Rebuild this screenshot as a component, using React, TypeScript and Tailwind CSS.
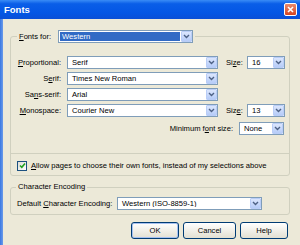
import React from "react";

function Arrow() {
  return (
    <div className="flex items-center justify-center w-[11px] h-[11px] rounded-[1px] border border-[#b9cdf7] bg-gradient-to-b from-[#dbe6fd] to-[#b6ccf8]">
      <svg width="7" height="5" viewBox="0 0 7 5">
        <path d="M1 1 L3.5 3.5 L6 1" fill="none" stroke="#4d6185" strokeWidth="1.4" />
      </svg>
    </div>
  );
}

function Combo({ value, w, focused }: { value: string; w: string; focused?: boolean }) {
  return (
    <div className={`flex items-center h-[13px] border border-[#7f9db9] bg-white ${w}`}>
      {focused ? (
        <span className="flex-1 h-[9px] mx-[1px] pl-[2px] flex items-center bg-[#316ac5] text-white leading-none truncate">
          {value}
        </span>
      ) : (
        <span className="flex-1 pl-[4px] leading-none truncate text-black">{value}</span>
      )}
      <Arrow />
    </div>
  );
}

function Row({ label, value, size }: { label: React.ReactNode; value: string; size?: React.ReactNode }) {
  return (
    <div className="flex items-center h-[13px]">
      <div className="w-[50px] text-right leading-none whitespace-nowrap">{label}</div>
      <div className="w-[6px]" />
      <Combo value={value} w="w-[151px]" />
      {size}
    </div>
  );
}

function Size({ u, value }: { u: "z" | "e"; value: string }) {
  return (
    <div className="flex items-center">
      <span className="ml-[8px] w-[21px] leading-none">
        {u === "z" ? (
          <>
            Si<u>z</u>e:
          </>
        ) : (
          <>
            Siz<u>e</u>:
          </>
        )}
      </span>
      <Combo value={value} w="w-[38px]" />
    </div>
  );
}

export default function App() {
  return (
    <div className="w-[300px] h-[245px] flex flex-col overflow-hidden bg-[#ece9d8] text-[7.6px] text-black font-['Liberation_Sans',sans-serif]">
      {/* title bar */}
      <div className="flex items-center h-[19px] shrink-0 bg-[linear-gradient(to_bottom,#3a8cf6,#0a5ee8_20%,#0456e4_70%,#0a4fd6)]">
        <span className="ml-[4px] text-white font-bold text-[9.5px] leading-none">Fonts</span>
        <div className="ml-auto mr-[3px] w-[13px] h-[13px] rounded-[2px] border border-white flex items-center justify-center bg-gradient-to-b from-[#e98a6c] to-[#d5431f]">
          <svg width="7" height="7" viewBox="0 0 7 7">
            <path d="M1 1 L6 6 M6 1 L1 6" stroke="white" strokeWidth="1.6" />
          </svg>
        </div>
      </div>

      <div className="flex flex-1">
        <div className="w-[3px] bg-[linear-gradient(to_right,#3a78e2,#6b9bea)]" />
        <div className="flex-1 flex flex-col pl-[7px] pr-[10px] pt-[11px]">
          {/* Fonts for group */}
          <fieldset className="border border-[#d0d0bf] rounded-[3px]">
            <legend className="ml-[6px] px-[2px]">
              <div className="flex items-center gap-[7px]">
                <span className="leading-none">
                  <u>F</u>onts for:
                </span>
                <Combo value="Western" w="w-[135px]" focused />
              </div>
            </legend>
            <div className="flex flex-col gap-[3px] pt-[13px]">
              <Row
                label={
                  <>
                    <u>P</u>roportional:
                  </>
                }
                value="Serif"
                size={<Size u="z" value="16" />}
              />
              <Row
                label={
                  <>
                    S<u>e</u>rif:
                  </>
                }
                value="Times New Roman"
              />
              <Row
                label={
                  <>
                    Sa<u>n</u>s-serif:
                  </>
                }
                value="Arial"
              />
              <Row
                label={
                  <>
                    <u>M</u>onospace:
                  </>
                }
                value="Courier New"
                size={<Size u="e" value="13" />}
              />
              <div className="flex items-center justify-end h-[13px] mt-[2px] pr-[5px] gap-[6px]">
                <span className="leading-none">
                  Minimum f<u>o</u>nt size:
                </span>
                <Combo value="None" w="w-[45px]" />
              </div>
            </div>
            <div className="h-px bg-[#d0d0bf] mt-[18px]" />
            <div className="flex items-center h-[13px] mt-[5px] mb-[3px] pl-[6px] gap-[4px]">
              <div className="w-[10px] h-[10px] border border-[#1c5180] bg-gradient-to-br from-[#dcdcd7] to-white flex items-center justify-center">
                <svg width="7" height="7" viewBox="0 0 7 7">
                  <path d="M1 3.5 L2.8 5.3 L6 1.5" fill="none" stroke="#21a121" strokeWidth="1.6" />
                </svg>
              </div>
              <span className="leading-none whitespace-nowrap">
                <u>A</u>llow pages to choose their own fonts, instead of my selections above
              </span>
            </div>
          </fieldset>

          {/* Character Encoding group */}
          <fieldset className="mt-[6px] border border-[#d0d0bf] rounded-[3px]">
            <legend className="ml-[5px] px-[2px] leading-[10px]">Character Encoding</legend>
            <div className="flex items-center h-[13px] mt-[5px] mb-[4px] pl-[6px]">
              <span className="w-[100px] leading-none whitespace-nowrap">
                Default <u>C</u>haracter Encoding:
              </span>
              <Combo value="Western (ISO-8859-1)" w="w-[145px]" />
            </div>
          </fieldset>

          {/* buttons */}
          <div className="flex justify-end gap-[4px] mt-[7px] pr-[2px]">
            <button className="w-[48px] h-[17px] rounded-[3px] border border-[#003c74] bg-gradient-to-b from-white to-[#e3e0d2] shadow-[inset_0_0_0_1px_#a7c1f0] leading-none">
              OK
            </button>
            <button className="w-[53px] h-[17px] rounded-[3px] border border-[#003c74] bg-gradient-to-b from-white to-[#e3e0d2] leading-none">
              Cancel
            </button>
            <button className="w-[48px] h-[17px] rounded-[3px] border border-[#003c74] bg-gradient-to-b from-white to-[#e3e0d2] leading-none">
              Help
            </button>
          </div>
        </div>
      </div>
    </div>
  );
}
